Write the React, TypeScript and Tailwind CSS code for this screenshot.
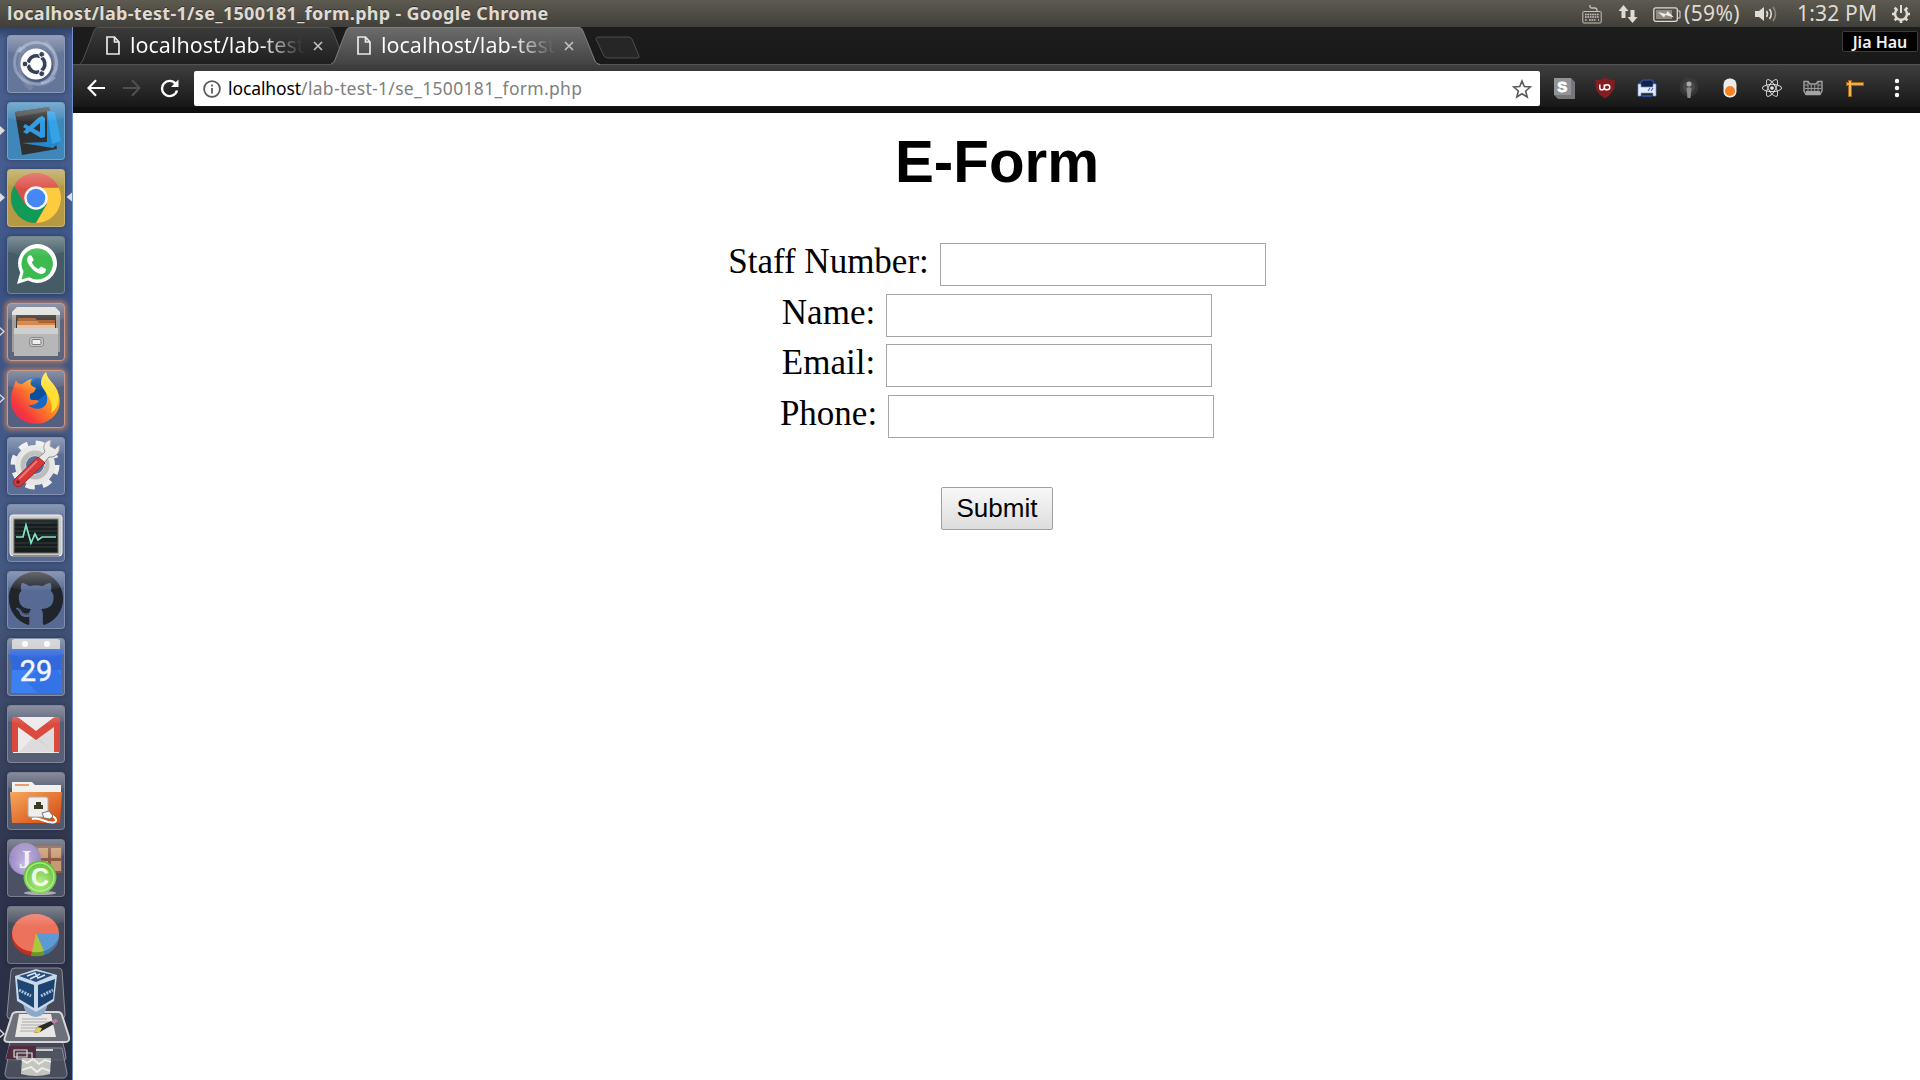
import React from "react";
import { FaGithub, FaReact } from "react-icons/fa";

const ubuntu = "font-['Noto_Sans',sans-serif]";

function Tile({
  bg,
  children,
  arrow,
  active,
  glow,
}: {
  bg: string;
  children: React.ReactNode;
  arrow?: "solid" | "hollow";
  active?: boolean;
  glow?: boolean;
}) {
  return (
    <div className="relative flex h-[67px] w-[72px] shrink-0 items-start pl-[7px]">
      {arrow && (
        <svg className="absolute left-0 top-[21px]" width="6" height="14" viewBox="0 0 6 14">
          <path
            d="M-1 3L4 7.500L-1 12Z"
            fill={arrow === "solid" ? "#dcdde2" : "none"}
            stroke="#dcdde2"
            strokeWidth="1.300"
          />
        </svg>
      )}
      <div
        className={
          "h-[58px] w-[58px] overflow-hidden rounded-[4px] border " +
          (glow ? "border-[#c99a86] shadow-[0_0_5px_2px_#b07a66] " : "border-white/25 shadow-[0_0_4px_1px_rgba(20,25,50,0.35)] ") +
          bg
        }
      >
        <svg className="-ml-px -mt-px" width="58" height="58" viewBox="0 0 58 58">
          <defs>
            <linearGradient id="gloss" x1="0" y1="0" x2="0" y2="1">
              <stop offset="0" stopColor="#fff" stopOpacity=".32" />
              <stop offset="1" stopColor="#fff" stopOpacity="0.020" />
            </linearGradient>
          </defs>
          {children}
          <path d="M0 0H58V16Q29 24 0 16Z" fill="url(#gloss)" />
        </svg>
      </div>
      {active && (
        <svg className="absolute right-0 top-[21px]" width="6" height="14" viewBox="0 0 6 14">
          <path d="M6 2.500L0.500 7L6 11.500Z" fill="#dcdde2" />
        </svg>
      )}
    </div>
  );
}

function UbuntuIcon() {
  return (
    <>
      <g fill="none" stroke="#fff">
        <path d="M12 17C22 3 42 5 48 20C53 34 44 46 34 48" strokeWidth="3" opacity=".3" />
        <path d="M48 42C36 54 16 50 9 36C6 27 8 18 14 12" strokeWidth="3" opacity=".28" />
        <path d="M18 12C10 22 10 42 25 54" strokeWidth="5" opacity=".12" />
        <path d="M38 7C52 18 50 34 46 40" strokeWidth="5" opacity=".12" />
      </g>
      <circle cx="30" cy="31" r="16" fill="#1b2748" opacity=".35" />
      <circle cx="29" cy="29" r="15.500" fill="#fff" />
      <circle cx="29.500" cy="29" r="8.300" fill="none" stroke="#35405c" strokeWidth="3.600" strokeDasharray="15.400 2" strokeDashoffset="-1" transform="rotate(-60 29.500 29)" />
      <g fill="#35405c" stroke="#fff" strokeWidth="1">
        <circle cx="18" cy="29" r="2.900" />
        <circle cx="34.700" cy="19.300" r="2.900" />
        <circle cx="34.700" cy="38.700" r="2.900" />
      </g>
    </>
  );
}

function CodeIcon() {
  return (
    <>
      <path d="M8 10L42 5L50 47L15 53Z" fill="#303030" />
      <path d="M8 10L42 5L43 9L10 15Z" fill="#4b4b4b" />
      <path d="M40 9L48 10L54 39L46 46L15 41L40 40Z" fill="#2388cf" />
      <path d="M40 9L48 10L54 39L45 42Z" fill="#35a1e7" />
      <path d="M35 14L38 16V35L34 36L16 25L18 22L33 30V21L20 32L16 30L31 16Z" fill="#319be1" />
    </>
  );
}

function ChromeIcon() {
  return (
    <>
      <circle cx="29" cy="29" r="25" fill="#e2574c" />
      <path d="M7.300 16.500A25 25 0 0 0 29 54L39.800 35.300L18.200 35.300Z" fill="#119a58" />
      <path d="M29 54A25 25 0 0 0 51.700 18.500H29L39.800 35.200Z" fill="#fdcb3e" />
      <path d="M29 18.500H51.700A25 25 0 0 0 7.300 16.500L18.200 35.300Z" fill="#db5148" />
      <circle cx="29" cy="29" r="11.700" fill="#f4f6f8" />
      <circle cx="29" cy="29" r="9.300" fill="#4687f4" />
    </>
  );
}

function WhatsAppIcon() {
  return (
    <>
      <path d="M10 48L13.200 36.500A19.500 19.500 0 1 1 21 44.500Z" fill="#fff" />
      <path d="M14.500 43.500L16.600 35.800A15.700 15.700 0 1 1 22 41.300Z" fill="#3dbb50" />
      <path d="M22 19.500C20 21 19.500 24 21 27C24 33 29 37 34 38C37 38 39 36 39 33L34 30.500L31.500 33C28 31.500 26 29 24.800 26.500L26.800 24L24.500 19.500Z" fill="#fff" />
    </>
  );
}

function FilesIcon() {
  return (
    <>
      <path d="M5 9L10 4H48L53 9V49H5Z" fill="#9e9e9c" />
      <path d="M5 9L10 4H48L53 9V12H5Z" fill="#dededc" />
      <path d="M9 12H49V28H9Z" fill="#3e3833" />
      <path d="M11 15H28L30 17H48V24H10Z" fill="#a85f2f" />
      <path d="M10 18H30L32 20H48V24H10Z" fill="#d38a50" />
      <path d="M10 22H48V25H10Z" fill="#ecc09a" />
      <path d="M7 25H51V53H7Z" fill="#b7b7b7" />
      <path d="M7 25H51V31H7Z" fill="#cfcfcf" />
      <rect x="22.500" y="34.500" width="14" height="9" rx="2.500" fill="#c9c9c9" stroke="#8a8a8a" />
      <rect x="25" y="36.500" width="9" height="5" rx="1" fill="#eee" stroke="#777" />
    </>
  );
}

function FirefoxIcon() {
  return (
    <>
      <defs>
        <linearGradient id="ff1" x1="1" y1="0" x2="0" y2="1">
          <stop offset="0" stopColor="#fff23a" />
          <stop offset=".4" stopColor="#ff9a1f" />
          <stop offset=".75" stopColor="#f5383d" />
          <stop offset="1" stopColor="#e0206a" />
        </linearGradient>
      </defs>
      <circle cx="29" cy="27" r="20" fill="#1368c9" />
      <path d="M29 8C38 9 41 15 39 24L26 34L18 18Z" fill="#0d4f9f" />
      <path
        d="M9 10C10 13 12 14 15 14C18 12 22 9 25 9C23 12 23 14 25 16L29 18L27 22L23 24V29C25 31 29 29 32 31C30 33 27 36 21 35C27 41 39 40 40 31C41 26 39 22 36 18L34 14C34 9 36 5 39 2C40 9 46 12 50 20C55 31 53 41 45 48C35 57 19 55 10 46C2 37 3 26 6 19C7 15 8 13 9 10Z"
        fill="url(#ff1)"
      />
      <path d="M39 2C40 9 46 12 50 20C54 31 50 39 44 43C48 30 37 22 34 14C34 9 36 5 39 2Z" fill="#ffdf35" />
    </>
  );
}

function SettingsIcon() {
  return (
    <>
      <circle cx="28" cy="28" r="21.500" fill="none" stroke="#eee" strokeWidth="6" strokeDasharray="9 7.890" />
      <circle cx="28" cy="28" r="14.500" fill="none" stroke="#e6e6e4" strokeWidth="11" />
      <circle cx="28" cy="28" r="12" fill="none" stroke="#bbbcbc" strokeWidth="5" />
      <path d="M31 21L38 15C35 8 38 4 44 3L43 9L48 12L52 8C54 16 48 21 42 20L36 27Z" fill="#e7e8e6" stroke="#8b8b8b" />
      <path d="M31 20L38 26L16 47C12 53 3 48 8 42Z" fill="#d7383b" stroke="#992629" />
      <path d="M30 24L12 42" stroke="#ef7772" strokeWidth="2" />
      <circle cx="11" cy="45" r="1.800" fill="#64262d" />
    </>
  );
}

function MonitorIcon() {
  return (
    <>
      <rect x="3" y="11" width="52" height="41" rx="3" fill="#c9c9c5" stroke="#f1f1ee" />
      <path d="M6 52H52" stroke="#8c8c8a" strokeWidth="2" />
      <rect x="7" y="15" width="44" height="34" fill="#171d1d" stroke="#6d6d6b" />
      <path d="M8 19H50M8 23H50M8 27H50M8 31H50M8 39H50M8 43H50" stroke="#354040" strokeWidth="1" />
      <path d="M9 33H16L19 21L24 39L28 30L31 36L35 33H49" fill="none" stroke="#83e6c3" strokeWidth="1.700" />
    </>
  );
}

function CalendarIcon() {
  return (
    <>
      <path d="M5 3Q5 1 8 1H50Q53 1 53 3V14H5Z" fill="#c8c9cd" />
      <circle cx="18" cy="6" r="3" fill="#fff" />
      <circle cx="40" cy="6" r="3" fill="#fff" />
      <path d="M2 11H56L54 30L55 55H4L5 32Z" fill="#3c80f2" />
      <path d="M2 11H56L54 32H5Z" fill="#3168dc" />
      <path d="M18 42L44 22L54 38V55H31Z" fill="#2d6be0" opacity=".6" />
      <text x="29" y="43" textAnchor="middle" fontFamily="Roboto" fontSize="29" fill="#f1f4fc" stroke="#f1f4fc" strokeWidth=".5">29</text>
    </>
  );
}

function MailIcon() {
  return (
    <>
      <path d="M6 14Q6 12 9 12H49Q52 12 52 15V48H6Z" fill="#ecebea" />
      <path d="M12 47L27 32L31 32L46 47Z" fill="#dcdcdc" />
      <path d="M29 34L48 48H52V16Z" fill="#cdcdcd" opacity=".5" />
      <path d="M5 15C5 12 9 11 12 13L29 26L46 13C49 11 53 12 53 15V47H47V22L29 35L11 22V47H5Z" fill="#db4a3f" />
    </>
  );
}

function NetworkIcon() {
  return (
    <>
      <path d="M5 10H25L28 13H54V32H5Z" fill="#efefec" />
      <path d="M8 13H22" stroke="#e68e5a" strokeWidth="2" />
      <defs>
        <linearGradient id="fold" x1="0" y1="0" x2="1" y2="1">
          <stop offset="0" stopColor="#f6a85f" />
          <stop offset="1" stopColor="#d4460c" />
        </linearGradient>
      </defs>
      <path d="M3 20H55L53 51H5Z" fill="url(#fold)" />
      <rect x="21" y="25" width="20" height="20" rx="2" fill="#eee" stroke="#b7aba0" />
      <path d="M27 37V33H29V30H34V33H36V37Z" fill="#3a3b22" />
      <path d="M25 47C33 44 40 53 48 50C51 48 47 44 43 43" fill="none" stroke="#fff" strokeWidth="2" />
      <path d="M35 41L42 39L46 44L43 47L37 46Z" fill="#f5f5f5" stroke="#777" />
    </>
  );
}

function JavaIcon() {
  return (
    <>
      <defs>
        <radialGradient id="ballJ" cx=".5" cy=".65" r=".6">
          <stop offset="0" stopColor="#c8bce6" />
          <stop offset="1" stopColor="#8f7cbc" />
        </radialGradient>
        <radialGradient id="ballC" cx=".5" cy=".65" r=".6">
          <stop offset="0" stopColor="#b4ef85" />
          <stop offset="1" stopColor="#5fbf3a" />
        </radialGradient>
      </defs>
      <path d="M29 7H55V34H29Z" fill="#8c5a44" />
      <path d="M31 9H41V19H31ZM44 9H54V19H44ZM44 22H54V32H44ZM31 22H41V32H31Z" fill="#c99a72" />
      <circle cx="18" cy="20" r="16" fill="url(#ballJ)" />
      <text x="18" y="29" textAnchor="middle" fontFamily="Liberation Serif" fontWeight="700" fontSize="25" fill="#f1edff">J</text>
      <ellipse cx="33" cy="54" rx="16" ry="2" fill="#e7e9e7" opacity=".6" />
      <circle cx="33" cy="38" r="16.500" fill="url(#ballC)" />
      <circle cx="33" cy="38" r="14" fill="none" stroke="#c4f59c" strokeWidth="1.500" opacity=".7" />
      <text x="33" y="47" textAnchor="middle" fontFamily="Liberation Sans" fontWeight="700" fontSize="25" fill="#f3ffe9">C</text>
    </>
  );
}

function PieIcon() {
  return (
    <>
      <path d="M5 28V33C7 44 18 50 29 50C40 50 50 44 52 33V27Z" fill="#c22d24" />
      <path d="M37 44V49.300Q49 45 52 33V27Z" fill="#397cad" />
      <path d="M25 44L24 49.700Q31 51 37 49.300L37 42Z" fill="#6e9527" />
      <ellipse cx="28.500" cy="27" rx="23.500" ry="19" fill="#ec725c" />
      <path d="M29 27H52C52 35 46 42 37 45Z" fill="#5d99d4" />
      <path d="M29 27L37 45Q31 47 25 46Z" fill="#a9c83e" />
    </>
  );
}

function DockStack() {
  return (
    <svg className="block shrink-0" width="72" height="113" viewBox="0 967 72 113">
      <g stroke="#8b8e9c" strokeWidth="1">
        <path d="M11 971Q11 968 15 968H58Q62 968 62 971L65 1015Q65 1019 61 1019H11Q7 1019 7 1015Z" fill="#515664" fillOpacity=".7" />
        <path d="M8 1051L12 1033H60L65 1051L66 1058Q66 1060 63 1060H9Q6 1060 6 1058Z" fill="#555361" fillOpacity=".7" />
        <path d="M10 1048H62L67 1073Q67 1078 63 1078H9Q5 1078 5 1073Z" fill="#535763" fillOpacity=".8" />
      </g>
      <path d="M9 1046H36V1059H6Z" fill="#512c3e" />
      <path d="M14 1050H27V1057H14ZM17 1053H32V1059H17Z" fill="#503847" stroke="#ddd" strokeWidth="1.200" />
      <path d="M22 1058H51L50 1074Q36 1078 21 1074Z" fill="#c4c4c1" />
      <path d="M22 1060L27 1063L33 1059L39 1064L45 1060L51 1062M22 1070L31 1067L37 1072L42 1068L50 1071" fill="none" stroke="#efefec" strokeWidth="1.800" />
      <path d="M36 1050H53" stroke="#cfcfca" strokeWidth="2" />
      <path d="M17 1012H58Q61 1012 62 1015L69 1037Q70 1042 65 1042H8Q3 1042 5 1037L12 1015Q13 1012 17 1012Z" fill="#6d7078" stroke="#d6d6d8" strokeWidth="2" />
      <path d="M19 1014H51L56 1037H15Z" fill="#e7e7e5" />
      <path d="M22 1019H47M22 1022H49M21 1025H47M21 1028H45M20 1031H39" stroke="#b0a8a8" />
      <path d="M23 1002Q24 1016 36 1017Q46 1016 48 1002Z" fill="#8ca9cb" />
      <path d="M15 976L36 969L57 975L54 1001L36 1012L17 1001Z" fill="#c8d9e9" />
      <path d="M19 976L36 971L53 975L36 982Z" fill="#284e78" />
      <path d="M17 979L34 985V1008L19 999Z" fill="#1e4675" />
      <path d="M55 979L38 985V1008L53 999Z" fill="#1b4270" />
      <path d="M27 976L35 973L38 978L45 975M30 979L40 974" stroke="#d7e7f6" strokeWidth="1.500" fill="none" />
      <path d="M19 990L31 996M41 996L53 990" stroke="#a7c0d9" strokeWidth="3" strokeDasharray="2 1" />
      <path d="M34 1033L37 1027L51 1021L54 1024L40 1032Z" fill="#292b29" />
      <path d="M34 1033L37 1027L42 1028L40 1032Z" fill="#e0cf51" />
      <path d="M51 1021L56 1019L58 1021L54 1024Z" fill="#bd7ea0" />
      <path d="M-1 1029L4 1034L-1 1038" fill="none" stroke="#dfdfe4" strokeWidth="1.300" />
    </svg>
  );
}

function Dock() {
  return (
    <aside className="flex h-[1053px] w-[73px] shrink-0 flex-col overflow-hidden border-r border-[#6f92cf] bg-[linear-gradient(#2f3f63_0px,#495f8f_12px,#455c8e_180px,#3a5283_260px,#435a88_420px,#44587f_560px,#3b4663_700px,#30364e_830px,#272c40_1053px)] pt-[8px]">
      <Tile bg="bg-[#65769b]"><UbuntuIcon /></Tile>
      <Tile bg="bg-[#3f87b8]" arrow="solid"><CodeIcon /></Tile>
      <Tile bg="bg-[#b39a43]" arrow="solid" active><ChromeIcon /></Tile>
      <Tile bg="bg-[#455c66]"><WhatsAppIcon /></Tile>
      <Tile bg="bg-[#5b6580]" arrow="hollow" glow><FilesIcon /></Tile>
      <Tile bg="bg-[#53607f]" arrow="hollow" glow><FirefoxIcon /></Tile>
      <Tile bg="bg-[#5b6e98]"><SettingsIcon /></Tile>
      <Tile bg="bg-[#566a92]"><MonitorIcon /></Tile>
      <Tile bg="bg-[#566a94]">
        <FaGithub x="1" y="0" size={56} color="#20242b" />
      </Tile>
      <Tile bg="bg-[#5a6a8c]"><CalendarIcon /></Tile>
      <Tile bg="bg-[#565f76]"><MailIcon /></Tile>
      <Tile bg="bg-[#50586e]"><NetworkIcon /></Tile>
      <Tile bg="bg-[#4c5266]"><JavaIcon /></Tile>
      <Tile bg="bg-[#454a5b]"><PieIcon /></Tile>
      <div className="-mt-[6px]"><DockStack /></div>
    </aside>
  );
}

function SystemBar() {
  return (
    <header className="flex h-[27px] shrink-0 items-center bg-[linear-gradient(#5d5a50,#413f3a)] pl-[7px] pr-[9px] text-[#dfdbd2]">
      <span className={ubuntu + " whitespace-nowrap text-[18px] font-bold leading-[27px] tracking-[0.3px] [text-shadow:0_-1px_0_#33322e]"}>
        localhost/lab-test-1/se_1500181_form.php - Google Chrome
      </span>
      <svg className="ml-auto" width="20" height="20" viewBox="0 0 20 20" fill="none" stroke="#c6c2b8">
        <path d="M8 1V3Q8 4 10 4H13Q15 4 15 7" strokeWidth="1.300" />
        <rect x=".8" y="7.500" width="18.400" height="11.500" rx="1" />
        <path d="M3 10.500H17M3 13H17M3 16H5M7 16H14M16 16H17" strokeWidth="1.700" strokeDasharray="1.700 .7" />
      </svg>
      <svg className="ml-[16px]" width="20" height="20" viewBox="0 0 20 20" fill="#dfdbd2">
        <path d="M5.500 1L10.500 7H7.500V14H3.500V7H.5ZM14.500 19L19.500 13H16.500V6H12.500V13H9.500Z" />
      </svg>
      <svg className="ml-[15px]" width="28" height="18" viewBox="0 0 28 18">
        <rect x=".8" y="2.800" width="23.500" height="13.500" rx="2" fill="none" stroke="#dfdbd2" strokeWidth="1.300" />
        <rect x="3" y="5" width="16" height="9" fill="#8e8b82" />
        <path d="M25 6H27V13H25" fill="none" stroke="#dfdbd2" />
        <path d="M5 7L13 9L14.500 6L21 12.500L12.500 10L11 12.500Z" fill="#efece4" />
      </svg>
      <span className={ubuntu + " ml-[3px] w-[60px] whitespace-nowrap text-[21px] leading-[27px] tracking-[0.4px]"}>(59%)</span>
      <svg className="ml-[11px]" width="23" height="18" viewBox="0 0 23 18" fill="none" stroke="#dfdbd2" strokeWidth="1.600">
        <path d="M0 6H4L9 2V16L4 12H0Z" fill="#dfdbd2" stroke="none" />
        <path d="M11.500 6Q13.500 9 11.500 12M14.500 4Q18 9 14.500 14" />
        <path d="M18 2Q23 9 18 16" stroke="#8a877f" />
      </svg>
      <span className={ubuntu + " ml-[19px] w-[81px] whitespace-nowrap text-[21px] leading-[27px] tracking-[0.2px]"}>1:32 PM</span>
      <svg className="ml-[13px]" width="20" height="20" viewBox="0 0 20 20" fill="none" stroke="#dfdbd2">
        <path d="M6.500 5A6 6 0 1 0 13.500 5" strokeWidth="2.500" />
        <path d="M10 1V9" strokeWidth="2" />
        <path d="M1 10H4M16 10H19M3.600 16.400L5.500 14.500M14.500 14.500L16.400 16.400M10 16V19M3.600 3.600L5.500 5.500M16.400 3.600L14.500 5.500" strokeWidth="2.600" />
      </svg>
    </header>
  );
}

function TabLabel({ active }: { active?: boolean }) {
  return (
    <div className="flex h-[37px] items-center">
      <svg width="14" height="19" viewBox="0 0 14 19" fill="none" stroke="#e9e9e9" strokeWidth="1.700">
        <path d="M1 1H8.500L13 6V18H1ZM8.500 1V6H13" />
      </svg>
      <span
        className={
          ubuntu +
          " -mt-[2px] ml-[10px] w-[174px] overflow-hidden whitespace-nowrap bg-clip-text text-[21.500px] leading-[36px] text-transparent " +
          (active
            ? "bg-[linear-gradient(90deg,#fff_75%,#5a5a5a_99%)]"
            : "bg-[linear-gradient(90deg,#fff_75%,#303030_99%)]")
        }
      >
        localhost/lab-test
      </span>
      <svg className="ml-[9px]" width="10" height="10" viewBox="0 0 10 10" stroke="#c3c3c3" strokeWidth="1.600">
        <path d="M1 1L9 9M9 1L1 9" />
      </svg>
    </div>
  );
}

function TabStrip() {
  return (
    <div className="relative flex h-[37px] bg-[linear-gradient(#1d1d1d,#191919)]">
      <svg className="absolute left-0 top-0" width="600" height="38" viewBox="73 27 600 38">
        <defs>
          <linearGradient id="t1" x1="0" y1="0" x2="0" y2="1">
            <stop offset="0" stopColor="#3b3b3b" />
            <stop offset="1" stopColor="#1e1e1e" />
          </linearGradient>
          <linearGradient id="t2" x1="0" y1="0" x2="0" y2="1">
            <stop offset="0" stopColor="#6c6c6c" />
            <stop offset="1" stopColor="#424242" />
          </linearGradient>
        </defs>
        <path d="M80 64Q82 62 83 60L94 31Q95 27.500 98 27.500H328Q332 27.500 333 31L344 60Q345 63 347 64.500H80" fill="url(#t1)" stroke="#525252" />
        <path d="M331 65Q334 63 335 60L346 31Q347 27.500 350 27.500H579Q582 27.500 583 31L595 61Q596 64 600 65Z" fill="url(#t2)" />
        <path d="M331 64Q334 63 335 60L346 31Q347 27.500 350 27.500H579Q582 27.500 583 31L595 61Q596 64 600 64.500" fill="none" stroke="#808080" />
        <path d="M599 37H628Q631 37 632 39L639 56Q640 58 637 58H608Q605 58 604 56L596 39Q596 37 599 37Z" fill="#262626" stroke="#4d4d4d" />
      </svg>
      <div className="relative ml-[33px] w-[251px]"><TabLabel /></div>
      <div className="relative w-[251px]"><TabLabel active /></div>
      <div className={ubuntu + " ml-auto mr-[2px] mt-[4px] flex h-[21px] w-[76px] items-center justify-center rounded-[2px] border border-[#3c3c3c] bg-black text-[16px] font-semibold text-[#f2f2f2]"}>
        Jia Hau
      </div>
    </div>
  );
}

function Slot({ children }: { children: React.ReactNode }) {
  return <div className="flex w-[41.600px] shrink-0 items-center justify-center">{children}</div>;
}

function Toolbar() {
  return (
    <div className="flex h-[49px] border-b-[6px] border-t border-b-[#0f0f0f] border-t-[#545454] bg-[linear-gradient(#3e3e3e,#171717)]">
      <div className="flex w-[121px] shrink-0 items-center pl-[14px] pt-[4px]">
        <svg width="18" height="18" viewBox="0 0 18 18" fill="none" stroke="#fff" strokeWidth="2.200"><path d="M9 1.200L1.500 9L9 16.800M1.500 9H18" /></svg>
        <svg className="ml-[18px]" width="18" height="18" viewBox="0 0 18 18" fill="none" stroke="#505050" strokeWidth="2"><path d="M9 1.200L16.500 9L9 16.800M16.500 9H0" /></svg>
        <svg className="ml-[19px]" width="19" height="19" viewBox="0 0 19 19">
          <path d="M15.800 5A7.600 7.600 0 1 0 17 11.500" fill="none" stroke="#fff" strokeWidth="2.400" />
          <path d="M18.500 .5V8H11Z" fill="#fff" />
        </svg>
      </div>
      <div className="mt-[6px] flex h-[35px] w-[1346px] shrink-0 items-center rounded-[2px] bg-white pl-[9px] pr-[8px]">
        <svg width="18" height="18" viewBox="0 0 18 18" fill="none" stroke="#5a5a5a" strokeWidth="1.800"><circle cx="9" cy="9" r="7.900" /><path d="M9 8V13.500M9 4.500V6.500" /></svg>
        <span className={ubuntu + " -mt-[2px] ml-[7px] whitespace-nowrap text-[17.500px] leading-[34px] tracking-[0.32px] text-[#808080]"}>
          <span className="tracking-[-0.1px] text-black">localhost</span>/lab-test-1/se_1500181_form.php
        </span>
        <svg className="ml-auto" width="20" height="20" viewBox="0 0 20 20" fill="none" stroke="#5a5a5a" strokeWidth="1.600"><path d="M10 2L12.300 7.500L18.300 8L13.700 12L15.200 18L10 14.800L4.800 18L6.300 12L1.700 8L7.700 7.500Z" /></svg>
      </div>
      <div className="flex items-center pl-[3px] pt-[4px]">
        <Slot>
          <svg width="22" height="22" viewBox="0 0 22 22">
            <path d="M1 1H18L22 5V22H5L1 18Z" fill="#75777b" /><path d="M1 1H18V18H1Z" fill="#929497" />
            <text x="9.300" y="15" textAnchor="middle" fontFamily="Liberation Sans" fontWeight="700" fontSize="15" fill="#fff" stroke="#fff" strokeWidth=".8">S</text>
          </svg>
        </Slot>
        <Slot>
          <svg width="20" height="22" viewBox="0 0 20 22">
            <path d="M10 .5Q14 3 19.500 3V10Q18 17 10 21.500Q2 17 .5 10V3Q6 3 10 .5Z" fill="#831d21" />
            <path d="M4.800 7.500V11Q4.800 12.800 6.800 12.800Q9.300 12.800 9.300 10.200Q9.300 7.800 12 7.800Q14.800 7.800 14.800 10.300Q14.800 12.800 12 12.800Q9.300 12.800 9.300 10.200V7.500" fill="none" stroke="#fff" strokeWidth="1.500" />
          </svg>
        </Slot>
        <Slot>
          <svg width="20" height="20" viewBox="0 0 20 20">
            <path d="M3 9V5L6 2H15L17 5V9" fill="#17213f" stroke="#294b9e" strokeWidth="1.500" />
            <path d="M1 6H4V9H16V6H19V18H16V15H4V18H1Z" fill="#e3ecff" stroke="#6d8fd8" strokeWidth=".7" />
            <path d="M5 17H15V19H5Z" fill="#294b9e" /><path d="M11 13L13 10M14 13L16 10" stroke="#294b9e" />
          </svg>
        </Slot>
        <Slot>
          <svg width="22" height="22" viewBox="0 0 22 22">
            <circle cx="11" cy="10" r="9.500" fill="#444" opacity=".5" /><circle cx="11" cy="10" r="6" fill="#555" opacity=".6" />
            <circle cx="11" cy="7" r="2.500" fill="#aaa" /><path d="M8.500 11Q11 9.500 13.500 11L12.500 21H9.500Z" fill="#8b8b8b" />
          </svg>
        </Slot>
        <Slot>
          <svg width="14" height="20" viewBox="0 0 14 20"><rect x=".5" y=".5" width="13" height="19" rx="6" fill="#ececec" /><circle cx="7" cy="13" r="5" fill="#f58220" /></svg>
        </Slot>
        <Slot><FaReact className="ml-px text-[20px] text-[#e7e7e7]" /></Slot>
        <Slot>
          <svg width="20" height="16" viewBox="0 0 20 16" fill="none" stroke="#a4a4a4">
            <path d="M1 1.500H5L7 4H13L15 1.500H19V11L17 14.500H3L1 11Z" fill="#333" strokeWidth="1.400" />
            <path d="M2 5H5M15 5H18M2 8.500H18M5 2V11M8.300 5V11M11.700 5V11M15 2V11" strokeWidth=".9" /><path d="M3 12.500H17" strokeWidth="3" />
          </svg>
        </Slot>
        <Slot>
          <svg width="18" height="20" viewBox="0 0 18 20"><path d="M0 6H18M4 2V19" stroke="#a36413" strokeWidth="4" /><path d="M1 6H17M4 3V18" stroke="#ffc66b" strokeWidth="1.700" /></svg>
        </Slot>
        <Slot>
          <svg width="6" height="20" viewBox="0 0 6 20" fill="#fff"><circle cx="3" cy="3" r="2.200" /><circle cx="3" cy="10" r="2.200" /><circle cx="3" cy="17" r="2.200" /></svg>
        </Slot>
      </div>
    </div>
  );
}

function Field({ label }: { label: string }) {
  return (
    <label className="flex h-[50.670px] items-start justify-center">
      <span className="mr-[11px] font-['Liberation_Serif',serif] text-[35px] leading-[38px]">{label}</span>
      <input className="h-[43px] w-[326px] border border-[#a6a6a6] bg-white px-[3px] text-[26px] outline-none" />
    </label>
  );
}

function FormPage() {
  return (
    <main className="flex flex-1 flex-col items-center bg-white pl-px text-black">
      <h1 className="mt-[16px] font-['Liberation_Sans',sans-serif] text-[58.300px] font-bold leading-[66px]">E-Form</h1>
      <form className="mt-[48px] flex flex-col items-center" onSubmit={(e) => e.preventDefault()}>
        <Field label="Staff Number:" />
        <Field label="Name:" />
        <Field label="Email:" />
        <Field label="Phone:" />
        <button className="mt-[41px] h-[43px] w-[112px] rounded-[2px] border border-[#a0a0a0] bg-[linear-gradient(#f8f8f8,#dddddd)] font-['Liberation_Sans',sans-serif] text-[26px] leading-[40px]">
          Submit
        </button>
      </form>
    </main>
  );
}

export default function App() {
  return (
    <div className="flex h-[1080px] w-[1920px] flex-col overflow-hidden bg-white">
      <SystemBar />
      <div className="flex min-h-0 flex-1">
        <Dock />
        <div className="flex min-w-0 flex-1 flex-col">
          <TabStrip />
          <Toolbar />
          <FormPage />
        </div>
      </div>
    </div>
  );
}
